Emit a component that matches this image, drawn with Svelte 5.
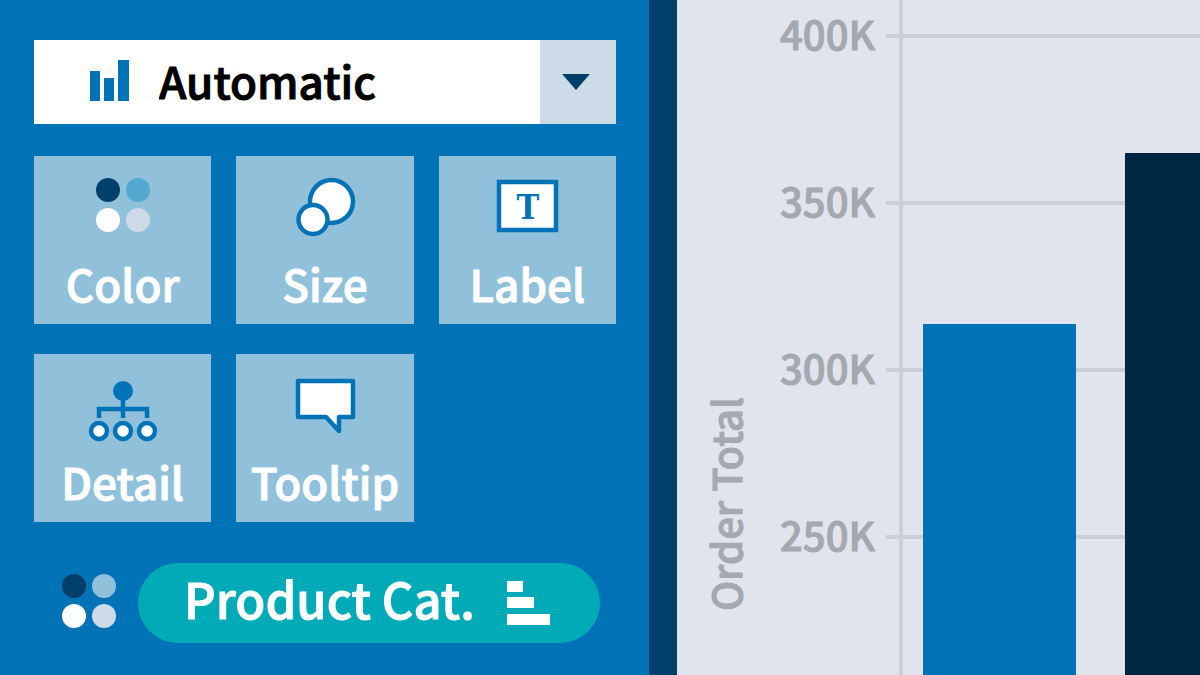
<script lang="ts">
  // Marks card on the left, bar chart on the right.

  type Bar = { name: string; value: number; color: string };

  const cards = ['Color', 'Size', 'Label', 'Detail', 'Tooltip'];
  const ticks = [400, 350, 300, 250];

  // the y axis starts a little above the first tick
  const axisTop = 410.9;
  const pxPerUnit = 3.34;

  const bars: Bar[] = [
    { name: 'first', value: 314, color: '#0073b7' },
    { name: 'second', value: 365, color: '#002741' },
  ];

  let markType = $state('Automatic');

  function barOffset(value: number) {
    return Math.round((axisTop - value) * pxPerUnit);
  }
</script>

{#snippet dots(second: string)}
  <svg class="dots" viewBox="0 0 54 54" aria-hidden="true">
    <circle cx="12" cy="12" r="12" fill="#003f69" />
    <circle cx="42" cy="12" r="12" fill={second} />
    <circle cx="12" cy="42" r="12" fill="#fff" />
    <circle cx="42" cy="42" r="12" fill="#cddae7" />
  </svg>
{/snippet}

<main>
  <section class="panel">
    <div class="mark-type">
      <svg class="bars-icon" viewBox="0 0 39 41" aria-hidden="true">
        <path d="M0 11h10v30H0zM14 18h10v23H14zM28 0h11v41H28z" fill="#0073b7" />
      </svg>
      <select bind:value={markType} aria-label="Mark type">
        <option>Automatic</option>
      </select>
      <span class="arrow">
        <svg viewBox="0 0 28 16" aria-hidden="true">
          <path d="M0 0h28L14 16z" fill="#003f69" />
        </svg>
      </span>
    </div>

    <div class="cards">
      {#each cards as card}
        <button class="card">
          <span class="icon">
            {#if card === 'Color'}
              {@render dots('#53a8d0')}
            {:else}
              <svg viewBox="0 0 72 70" aria-hidden="true">
                {#if card === 'Size'}
                  <g fill="#fff" stroke="#0073b7" stroke-width="4.5">
                    <circle cx="42.5" cy="25.5" r="21.5" />
                    <circle cx="24" cy="43.5" r="14.5" />
                  </g>
                {:else if card === 'Label'}
                  <rect x="8" y="6" width="57" height="48" fill="#fff" stroke="#0073b7" stroke-width="4.5" />
                  <text class="letter" x="37" y="43" text-anchor="middle">T</text>
                {:else if card === 'Detail'}
                  <g fill="none" stroke="#0073b7" stroke-width="4.5">
                    <path d="M36 22v22M12 44V35h48v9" />
                    <circle cx="12" cy="57" r="8" fill="#fff" />
                    <circle cx="36" cy="57" r="8" fill="#fff" />
                    <circle cx="60" cy="57" r="8" fill="#fff" />
                  </g>
                  <circle cx="36" cy="17" r="10" fill="#0073b7" />
                {:else}
                  <path
                    d="M9 7h55v36h-14v14l-13-14h-28z"
                    fill="#fff"
                    stroke="#0073b7"
                    stroke-width="4.5"
                    stroke-linejoin="round"
                  />
                {/if}
              </svg>
            {/if}
          </span>
          {card}
        </button>
      {/each}
    </div>

    <div class="field">
      {@render dots('#91c1da')}
      <button class="pill">
        <span>Product Cat.</span>
        <svg viewBox="0 0 43 44" aria-hidden="true">
          <path d="M0 0h16v11H0zM0 16h27v11H0zM0 33h43v11H0z" fill="#fff" />
        </svg>
      </button>
    </div>
  </section>

  <section class="chart">
    <span class="axis-title">Order Total</span>
    <div class="ticks">
      {#each ticks as tick}
        <div class="tick">
          <span>{tick}K</span>
          <i></i>
        </div>
      {/each}
    </div>
    <div class="plot">
      {#each bars as bar (bar.name)}
        <div class="bar" style="margin-top: {barOffset(bar.value)}px; background: {bar.color}"></div>
      {/each}
    </div>
  </section>
</main>

<style>
  :global(body) {
    margin: 0;
    font-family: 'Noto Sans CJK JP', 'Noto Sans', sans-serif;
    font-weight: 500;
    -webkit-text-stroke: 1px currentColor;
  }

  main {
    display: grid;
    grid-template-columns: 677fr 523fr;
    min-height: 100vh;
  }

  .panel {
    box-sizing: border-box;
    padding: 40px 33px 33px 34px;
    border-right: 28px solid #003f69;
    background: #0073b7;
  }

  svg {
    display: block;
  }

  button,
  select {
    border: none;
    border-radius: 0;
    font: inherit;
  }

  .mark-type {
    position: relative;
    height: 84px;
  }

  select {
    appearance: none;
    width: 100%;
    height: 100%;
    padding: 0 76px 4px 125px;
    background: #fff;
    color: #000;
    font-size: 44px;
  }

  .bars-icon {
    position: absolute;
    left: 56px;
    top: 20px;
    width: 39px;
    pointer-events: none;
  }

  .arrow {
    box-sizing: border-box;
    position: absolute;
    top: 0;
    right: 0;
    bottom: 0;
    display: grid;
    place-items: center;
    width: 76px;
    padding-right: 4px;
    background: #cddae7;
    pointer-events: none;
  }

  .arrow svg {
    width: 28px;
  }

  .cards {
    display: grid;
    grid-template-columns: repeat(3, 1fr);
    gap: 30px 25px;
    margin-top: 32px;
  }

  .card {
    display: flex;
    flex-direction: column;
    align-items: center;
    min-width: 0;
    height: 168px;
    padding: 20px 0 0;
    background: #91c1da;
    color: #fff;
    font-size: 44px;
    line-height: 60px;
    white-space: nowrap;
  }

  .icon {
    height: 77px;
  }

  .icon svg {
    width: 72px;
  }

  .icon .dots {
    width: 54px;
    margin-top: 2px;
  }

  .letter {
    fill: #0073b7;
    font-family: 'DejaVu Serif Condensed', 'DejaVu Serif', serif;
    font-size: 34px;
    font-weight: 700;
    -webkit-text-stroke: 0;
  }

  .field {
    display: flex;
    align-items: center;
    gap: 22px;
    margin: 41px 16px 0 28px;
  }

  .field .dots {
    width: 54px;
    padding-bottom: 4px;
  }

  .pill {
    display: flex;
    flex: 1;
    align-items: center;
    justify-content: space-between;
    height: 80px;
    padding: 0 50px 0 46px;
    border-radius: 40px;
    background: #00abb7;
    color: #fff;
    font-size: 49px;
    line-height: 60px;
    white-space: nowrap;
  }

  .pill span {
    padding-bottom: 10px;
  }

  .pill svg {
    width: 43px;
  }

  .chart {
    display: grid;
    grid-template-columns: 100%;
    overflow: hidden;
    background: #e1e4ed;
    color: #a4a8b0;
    font-size: 40px;
    line-height: 60px;
  }

  .axis-title,
  .ticks,
  .plot {
    grid-area: 1 / 1;
  }

  .axis-title {
    justify-self: start;
    align-self: start;
    margin: 397px 0 0 18px;
    writing-mode: vertical-rl;
    transform: rotate(180deg);
    white-space: nowrap;
  }

  .ticks {
    display: grid;
    align-content: start;
    gap: 107px;
    padding-top: 6px;
  }

  .tick {
    display: flex;
    align-items: center;
    gap: 11px;
    height: 60px;
  }

  .tick span {
    width: 198px;
    padding-bottom: 6px;
    text-align: right;
  }

  .tick i {
    flex: 1;
    height: 4px;
    background: #cbced8;
  }

  .plot {
    display: flex;
    gap: 49px;
    margin-left: 222px;
    padding-left: 20px;
    border-left: 4px solid #cbced8;
  }

  .bar {
    flex: 0 0 153px;
  }
</style>
